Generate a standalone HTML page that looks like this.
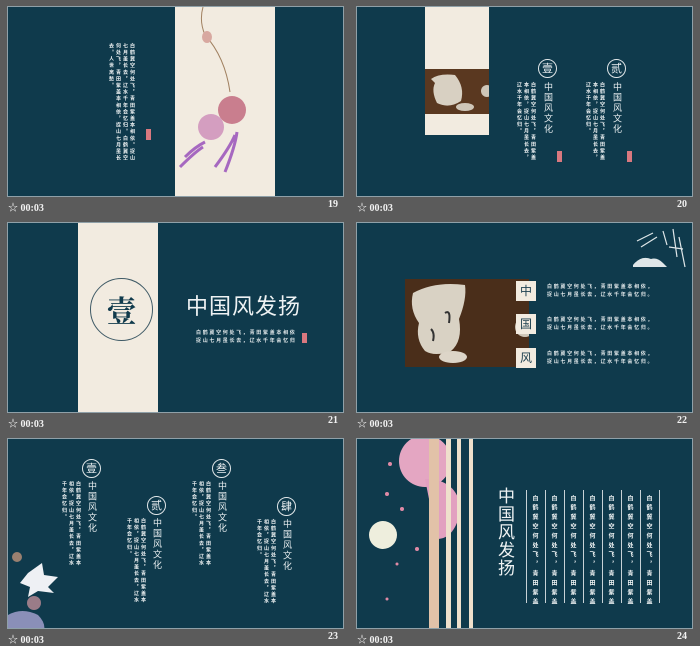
<!DOCTYPE html>
<html><head><meta charset="utf-8"><style>
*{margin:0;padding:0;box-sizing:border-box}
body{width:700px;height:646px;background:#5b5b5b;position:relative;overflow:hidden;font-family:"Liberation Sans","Noto Sans CJK SC",sans-serif}
.s{position:absolute;width:337px;height:191px;background:#0f3a4c;border:1px solid #8fa0a8;overflow:hidden}
.a{position:absolute}
.lab{position:absolute;color:#f2f2f2;font:bold 10px "Liberation Serif","Noto Serif CJK SC",serif}
.v{position:absolute;writing-mode:vertical-rl;color:#eef2f3;font-size:5px;line-height:7px;letter-spacing:1.6px;font-weight:bold;font-family:"Noto Sans CJK SC",sans-serif}
.tt{position:absolute;writing-mode:vertical-rl;color:#e8eef0;font-size:9px;letter-spacing:1.5px;font-family:"Noto Sans CJK SC",sans-serif}
.c{position:absolute;border:1px solid #e0e6e8;border-radius:50%;color:#e8eef0;text-align:center;font-family:"Noto Sans CJK SC",sans-serif}
.seal{position:absolute;width:5px;height:11px;background:#d9787f}
.ln{position:absolute;width:1px;background:#c8d2d6}
</style></head><body>

<!-- slide 19 -->
<div class="s" style="left:7px;top:6px">
 <div class="a" style="left:167px;top:0;width:100px;height:191px;background:#f2ebe0"></div>
 <svg class="a" style="left:167px;top:0" width="100" height="191">
  <path d="M28 0 Q24 14 30 28 Q50 50 55 85" stroke="#a08060" fill="none"/>
  <ellipse cx="32" cy="30" rx="5" ry="6" fill="#d8a8a0"/>
  <circle cx="57" cy="103" r="14" fill="#c97e8e"/>
  <circle cx="36" cy="120" r="13" fill="#d49ec0"/>
  <path d="M10 150 Q20 140 30 135 M5 160 Q20 145 28 140 M50 165 Q60 140 62 125 M40 160 Q55 140 60 128" stroke="#a668c0" stroke-width="3" fill="none"/>
 </svg>
 <div class="v" style="left:72px;top:36px;height:120px;width:56px">白鹤冀空何处飞，青田紫盖本相依。捉山七月虽长去，辽水千年会忆归。白鹤冀空何处飞，青田紫盖本相依，捉山七月虽长去。人世离愁。</div>
 <div class="seal" style="left:138px;top:122px"></div>
</div>
<div class="lab" style="left:8px;top:199px">☆ 00:03</div>
<div class="lab" style="left:328px;top:199px">19</div>

<!-- slide 20 -->
<div class="s" style="left:356px;top:6px">
 <div class="a" style="left:68px;top:0;width:64px;height:128px;background:#f2ebe0"></div>
 <div class="a" style="left:68px;top:62px;width:64px;height:45px;background:#5a3820"></div>
 <svg class="a" style="left:68px;top:62px" width="64" height="45"><path d="M6 10 Q14 4 30 6 Q40 18 36 32 Q24 40 12 34 Q6 22 10 14Z" fill="#d8d0c2"/><ellipse cx="40" cy="38" rx="9" ry="4" fill="#cfc6b8"/><circle cx="62" cy="22" r="6" fill="#cfc6b8"/></svg>
 <div class="c" style="left:181px;top:52px;width:19px;height:19px;font-size:11px;line-height:17px">壹</div>
 <div class="tt" style="left:185px;top:75px">中国风文化</div>
 <div class="v" style="left:152px;top:75px;height:85px;width:28px">白鹤冀空何处飞，青田紫盖本相依，捉山七月虽长去，辽水千年会忆归。</div>
 <div class="seal" style="left:200px;top:144px"></div>
 <div class="c" style="left:250px;top:52px;width:19px;height:19px;font-size:11px;line-height:17px">贰</div>
 <div class="tt" style="left:254px;top:75px">中国风文化</div>
 <div class="v" style="left:221px;top:75px;height:85px;width:28px">白鹤冀空何处飞，青田紫盖本相依，捉山七月虽长去，辽水千年会忆归。</div>
 <div class="seal" style="left:270px;top:144px"></div>
</div>
<div class="lab" style="left:357px;top:199px">☆ 00:03</div>
<div class="lab" style="left:677px;top:199px">20</div>

<!-- slide 21 -->
<div class="s" style="left:7px;top:222px">
 <div class="a" style="left:70px;top:0;width:80px;height:191px;background:#f2ebe0"></div>
 <div class="a" style="left:82px;top:55px;width:63px;height:63px;border:1px solid #3f5a66;border-radius:50%;color:#103a4c;font:bold 30px/60px 'Noto Serif CJK SC',serif;text-align:center">壹</div>
 <div class="a" style="left:178px;top:66px;color:#eef2f3;font-size:22px;letter-spacing:1px;font-family:'Noto Sans CJK SC',sans-serif">中国风发扬</div>
 <div class="a" style="left:188px;top:106px;color:#dfe6e8;font-size:5px;line-height:8px;letter-spacing:1.7px;font-weight:bold;font-family:'Noto Sans CJK SC',sans-serif">白鹤冀空何处飞，青田紫盖本相依<br>捉山七月虽长去，辽水千年会忆归</div>
 <div class="seal" style="left:294px;top:110px;height:10px"></div>
</div>
<div class="lab" style="left:8px;top:415px">☆ 00:03</div>
<div class="lab" style="left:328px;top:415px">21</div>

<!-- slide 22 -->
<div class="s" style="left:356px;top:222px">
 <div class="a" style="left:48px;top:56px;width:124px;height:88px;background:#4a2e1a"></div>
 <svg class="a" style="left:48px;top:56px" width="124" height="88"><path d="M8 14 Q30 2 60 6 Q62 20 54 40 Q58 62 46 72 Q30 78 20 72 Q10 60 14 44 Q4 30 8 14Z" fill="#d9d2c4"/><ellipse cx="48" cy="78" rx="14" ry="6" fill="#ddd5c8"/><circle cx="120" cy="48" r="10" fill="#cfc7b9"/><path d="M40 34 Q46 30 44 44 M26 50 Q30 54 28 62" stroke="#333" stroke-width="2" fill="none"/></svg>
 <div class="a" style="left:159px;top:58px;width:20px;height:20px;background:#f2ebe0;color:#1b3e4e;font:12px/20px 'Noto Sans CJK SC';text-align:center">中</div>
 <div class="a" style="left:159px;top:91px;width:20px;height:20px;background:#f2ebe0;color:#1b3e4e;font:12px/20px 'Noto Sans CJK SC';text-align:center">国</div>
 <div class="a" style="left:159px;top:125px;width:20px;height:20px;background:#f2ebe0;color:#1b3e4e;font:12px/20px 'Noto Sans CJK SC';text-align:center">风</div>
 <div class="a" style="left:190px;top:60px;color:#dfe6e8;font-size:5px;line-height:8px;letter-spacing:1.7px;font-weight:bold;font-family:'Noto Sans CJK SC'">白鹤冀空何处飞，青田紫盖本相依，<br>捉山七月虽长去，辽水千年会忆归。</div>
 <div class="a" style="left:190px;top:93px;color:#dfe6e8;font-size:5px;line-height:8px;letter-spacing:1.7px;font-weight:bold;font-family:'Noto Sans CJK SC'">白鹤冀空何处飞，青田紫盖本相依，<br>捉山七月虽长去，辽水千年会忆归。</div>
 <div class="a" style="left:190px;top:127px;color:#dfe6e8;font-size:5px;line-height:8px;letter-spacing:1.7px;font-weight:bold;font-family:'Noto Sans CJK SC'">白鹤冀空何处飞，青田紫盖本相依，<br>捉山七月虽长去，辽水千年会忆归。</div>
 <svg class="a" style="left:276px;top:4px" width="56" height="46"><path d="M4 14 L20 6 M8 20 L24 10 M30 4 L34 18 M40 2 L44 30 M46 10 L52 40 M36 20 L50 22" stroke="#dfe6e8" stroke-width="1.2" fill="none"/><path d="M0 38 Q8 28 18 32 Q24 30 30 36 L34 40 L0 40Z" fill="#dfe6e8"/></svg>
</div>
<div class="lab" style="left:357px;top:415px">☆ 00:03</div>
<div class="lab" style="left:677px;top:415px">22</div>

<!-- slide 23 -->
<div class="s" style="left:7px;top:438px">
 <div class="c" style="left:74px;top:20px;width:19px;height:19px;font-size:11px;line-height:17px">壹</div>
 <div class="tt" style="left:78px;top:42px">中国风文化</div>
 <div class="v" style="left:44px;top:42px;height:88px;width:30px">白鹤冀空何处飞，青田紫盖本相依，捉山七月虽长去，辽水千年会忆归。</div>
 <div class="c" style="left:139px;top:57px;width:19px;height:19px;font-size:11px;line-height:17px">贰</div>
 <div class="tt" style="left:143px;top:79px">中国风文化</div>
 <div class="v" style="left:109px;top:79px;height:88px;width:30px">白鹤冀空何处飞，青田紫盖本相依，捉山七月虽长去，辽水千年会忆归。</div>
 <div class="c" style="left:204px;top:20px;width:19px;height:19px;font-size:11px;line-height:17px">叁</div>
 <div class="tt" style="left:208px;top:42px">中国风文化</div>
 <div class="v" style="left:174px;top:42px;height:88px;width:30px">白鹤冀空何处飞，青田紫盖本相依，捉山七月虽长去，辽水千年会忆归。</div>
 <div class="c" style="left:269px;top:58px;width:19px;height:19px;font-size:11px;line-height:17px">肆</div>
 <div class="tt" style="left:273px;top:80px">中国风文化</div>
 <div class="v" style="left:239px;top:80px;height:88px;width:30px">白鹤冀空何处飞，青田紫盖本相依，捉山七月虽长去，辽水千年会忆归。</div>
 <svg class="a" style="left:0;top:110px" width="60" height="82"><circle cx="9" cy="8" r="5" fill="#9a8070"/><path d="M20 24 L34 14 L36 26 L50 28 L40 38 L46 44 L30 42 L20 48 L22 38 L12 34Z" fill="#eef0f4"/><circle cx="26" cy="54" r="7" fill="#9a7c88"/><path d="M0 66 Q14 58 30 66 Q38 74 36 82 L0 82Z" fill="#8a8fb8"/></svg>
</div>
<div class="lab" style="left:8px;top:631px">☆ 00:03</div>
<div class="lab" style="left:328px;top:631px">23</div>

<!-- slide 24 -->
<div class="s" style="left:356px;top:438px">
 <svg class="a" style="left:0;top:0" width="125" height="191">
  <circle cx="68" cy="22" r="26" fill="#e4a6c2"/>
  <path d="M68 40 Q100 40 104 70 Q98 100 80 100Z" fill="#e2a0c0"/>
  <circle cx="26" cy="96" r="14" fill="#eeeedd"/>
  <rect x="72" y="0" width="10" height="191" fill="#e2c2a8"/>
  <rect x="89" y="0" width="5" height="191" fill="#efe0cc"/>
  <rect x="100" y="0" width="4" height="191" fill="#efe0cc"/>
  <rect x="112" y="0" width="4" height="191" fill="#efe0cc"/>
  <g fill="#e08aa6"><circle cx="33" cy="25" r="2"/><circle cx="30" cy="55" r="2"/><circle cx="45" cy="70" r="2"/><circle cx="60" cy="110" r="2"/><circle cx="40" cy="125" r="1.5"/><circle cx="30" cy="160" r="1.5"/></g>
 </svg>
 <div class="a" style="left:137px;top:48px;writing-mode:vertical-rl;color:#eef2f3;font-size:17px;letter-spacing:1px;font-family:'Noto Sans CJK SC'">中国风发扬</div>
 <div class="ln" style="left:169px;top:51px;height:113px"></div>
 <div class="ln" style="left:188px;top:51px;height:113px"></div>
 <div class="ln" style="left:207px;top:51px;height:113px"></div>
 <div class="ln" style="left:226px;top:51px;height:113px"></div>
 <div class="ln" style="left:245px;top:51px;height:113px"></div>
 <div class="ln" style="left:264px;top:51px;height:113px"></div>
 <div class="ln" style="left:283px;top:51px;height:113px"></div>
 <div class="ln" style="left:302px;top:51px;height:113px"></div>
 <div class="v" style="left:175px;top:56px;font-size:6px;letter-spacing:3.4px">白鹤冀空何处飞，青田紫盖</div>
 <div class="v" style="left:194px;top:56px;font-size:6px;letter-spacing:3.4px">白鹤冀空何处飞，青田紫盖</div>
 <div class="v" style="left:213px;top:56px;font-size:6px;letter-spacing:3.4px">白鹤冀空何处飞，青田紫盖</div>
 <div class="v" style="left:232px;top:56px;font-size:6px;letter-spacing:3.4px">白鹤冀空何处飞，青田紫盖</div>
 <div class="v" style="left:251px;top:56px;font-size:6px;letter-spacing:3.4px">白鹤冀空何处飞，青田紫盖</div>
 <div class="v" style="left:270px;top:56px;font-size:6px;letter-spacing:3.4px">白鹤冀空何处飞，青田紫盖</div>
 <div class="v" style="left:289px;top:56px;font-size:6px;letter-spacing:3.4px">白鹤冀空何处飞，青田紫盖</div>
</div>
<div class="lab" style="left:357px;top:631px">☆ 00:03</div>
<div class="lab" style="left:677px;top:631px">24</div>

</body></html>
